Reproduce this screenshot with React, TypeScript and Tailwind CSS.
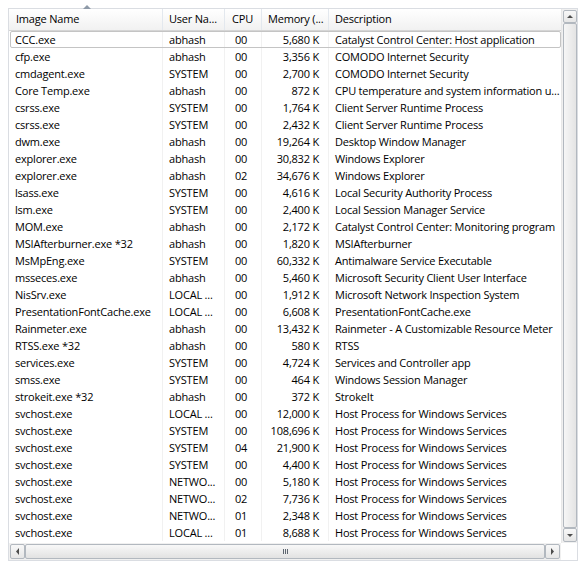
type Row = [string, string, string, string, string];

const rows: Row[] = [
  ["CCC.exe", "abhash", "00", "5,680 K", "Catalyst Control Center: Host application"],
  ["cfp.exe", "abhash", "00", "3,356 K", "COMODO Internet Security"],
  ["cmdagent.exe", "SYSTEM", "00", "2,700 K", "COMODO Internet Security"],
  ["Core Temp.exe", "abhash", "00", "872 K", "CPU temperature and system information u..."],
  ["csrss.exe", "SYSTEM", "00", "1,764 K", "Client Server Runtime Process"],
  ["csrss.exe", "SYSTEM", "00", "2,432 K", "Client Server Runtime Process"],
  ["dwm.exe", "abhash", "00", "19,264 K", "Desktop Window Manager"],
  ["explorer.exe", "abhash", "00", "30,832 K", "Windows Explorer"],
  ["explorer.exe", "abhash", "02", "34,676 K", "Windows Explorer"],
  ["lsass.exe", "SYSTEM", "00", "4,616 K", "Local Security Authority Process"],
  ["lsm.exe", "SYSTEM", "00", "2,400 K", "Local Session Manager Service"],
  ["MOM.exe", "abhash", "00", "2,172 K", "Catalyst Control Center: Monitoring program"],
  ["MSIAfterburner.exe *32", "abhash", "00", "1,820 K", "MSIAfterburner"],
  ["MsMpEng.exe", "SYSTEM", "00", "60,332 K", "Antimalware Service Executable"],
  ["msseces.exe", "abhash", "00", "5,460 K", "Microsoft Security Client User Interface"],
  ["NisSrv.exe", "LOCAL ...", "00", "1,912 K", "Microsoft Network Inspection System"],
  ["PresentationFontCache.exe", "LOCAL ...", "00", "6,608 K", "PresentationFontCache.exe"],
  ["Rainmeter.exe", "abhash", "00", "13,432 K", "Rainmeter - A Customizable Resource Meter"],
  ["RTSS.exe *32", "abhash", "00", "580 K", "RTSS"],
  ["services.exe", "SYSTEM", "00", "4,724 K", "Services and Controller app"],
  ["smss.exe", "SYSTEM", "00", "464 K", "Windows Session Manager"],
  ["strokeit.exe *32", "abhash", "00", "372 K", "StrokeIt"],
  ["svchost.exe", "LOCAL ...", "00", "12,000 K", "Host Process for Windows Services"],
  ["svchost.exe", "SYSTEM", "00", "108,696 K", "Host Process for Windows Services"],
  ["svchost.exe", "SYSTEM", "04", "21,900 K", "Host Process for Windows Services"],
  ["svchost.exe", "SYSTEM", "00", "4,400 K", "Host Process for Windows Services"],
  ["svchost.exe", "NETWO...", "00", "5,180 K", "Host Process for Windows Services"],
  ["svchost.exe", "NETWO...", "02", "7,736 K", "Host Process for Windows Services"],
  ["svchost.exe", "NETWO...", "01", "2,348 K", "Host Process for Windows Services"],
  ["svchost.exe", "LOCAL ...", "01", "8,688 K", "Host Process for Windows Services"],
];

function Arrow({ dir }: { dir: "up" | "down" | "left" | "right" }) {
  const pts = {
    up: "1,4 4,1 7,4",
    down: "1,1 4,4 7,1",
    left: "4,0 1,3.5 4,7",
    right: "1,0 4,3.5 1,7",
  }[dir];
  const vertical = dir === "up" || dir === "down";
  return (
    <svg viewBox={vertical ? "0 0 8 5" : "0 0 5 7"} className={vertical ? "w-[8px] h-[5px]" : "w-[5px] h-[7px]"}>
      <polygon points={pts} fill="#4d4d4d" />
    </svg>
  );
}

export default function App() {
  return (
    <div
      className="relative w-[587px] h-[568px] bg-white pt-[8px] pl-[8px] text-[11px] tracking-[-0.2px] text-black"
      style={{ fontFamily: "'Open Sans', 'Noto Sans', sans-serif" }}
    >
      {/* sort indicator */}
      <svg viewBox="0 0 8 4" className="absolute left-[83px] top-[5px] w-[8px] h-[4px]">
        <polygon points="0,4 4,0 8,4" fill="#8e9aa8" />
      </svg>
      <div className="w-[570px] h-[553px] border border-[#dadde2] flex flex-col">
        <div className="flex flex-1">
          {/* ── list ───────────────────────────── */}
          <div className="w-[552px] flex flex-col">
            <div className="h-[22px] flex border-b border-[#d5d5d5] bg-gradient-to-b from-white to-[#f1f1f1] whitespace-nowrap">
              <div className="w-[154px] pl-[7px] flex items-center border-r border-[#e3e8ee]">Image Name</div>
              <div className="w-[62px] pl-[6px] flex items-center border-r border-[#e3e8ee]">User Na...</div>
              <div className="w-[37px] pl-[7px] flex items-center border-r border-[#e3e8ee]">CPU</div>
              <div className="w-[67px] pl-[6px] flex items-center border-r border-[#e3e8ee] overflow-hidden">Memory (...</div>
              <div className="flex-1 pl-[6px] flex items-center">Description</div>
            </div>
            <div className="flex flex-col">
              {rows.map((r, i) => (
                <div
                  key={i}
                  className={`h-[17px] flex leading-[17px] whitespace-nowrap ${
                    i === 0 ? "outline outline-1 outline-[#c4c4c4] -outline-offset-1 rounded-[2px] ml-px" : ""
                  }`}
                >
                  <div className={`${i === 0 ? "w-[153px] pl-[5px]" : "w-[154px] pl-[6px]"} border-r border-[#f1f1f1] overflow-hidden`}>
                    {r[0]}
                  </div>
                  <div className="w-[62px] pl-[6px] border-r border-[#f1f1f1] overflow-hidden">{r[1]}</div>
                  <div className="w-[37px] pl-[10px] border-r border-[#f1f1f1]">{r[2]}</div>
                  <div className="w-[67px] pr-[9px] text-right border-r border-[#f1f1f1]">{r[3]}</div>
                  <div className="flex-1 pl-[6px] overflow-hidden">{r[4]}</div>
                </div>
              ))}
            </div>
          </div>
          {/* ── vertical scrollbar ─────────────── */}
          <div className="w-[16px] bg-[#f0f0f0] border-l border-[#e8e8e8] flex flex-col items-center py-px">
            <div className="w-[14px] h-[13px] rounded-[2px] border border-[#b2b8bf] bg-gradient-to-b from-[#f8f8f8] to-[#e6e6e6] flex items-center justify-center">
              <Arrow dir="up" />
            </div>
            <div className="w-[14px] flex-1 rounded-[2px] border border-[#b2b8bf] bg-gradient-to-r from-[#f6f6f6] to-[#e4e4e4]" />
            <div className="w-[14px] h-[14px] rounded-[2px] border border-[#b2b8bf] bg-gradient-to-b from-[#f8f8f8] to-[#e6e6e6] flex items-center justify-center">
              <Arrow dir="down" />
            </div>
          </div>
        </div>
        {/* ── horizontal scrollbar ─────────────── */}
        <div className="h-[17px] flex">
          <div className="w-[552px] bg-[#f0f0f0] flex items-center px-px">
            <div className="w-[15px] h-[15px] rounded-[2px] border border-[#b2b8bf] bg-gradient-to-b from-[#f8f8f8] to-[#e6e6e6] flex items-center justify-center">
              <Arrow dir="left" />
            </div>
            <div className="flex-1 h-[15px] rounded-[2px] border border-[#b2b8bf] bg-gradient-to-b from-[#f8f8f8] to-[#e2e2e2] flex items-center justify-center">
              <div className="flex gap-[1px]">
                <div className="w-[1px] h-[5px] bg-[#5e6670]" />
                <div className="w-[1px] h-[5px] bg-[#5e6670]" />
                <div className="w-[1px] h-[5px] bg-[#5e6670]" />
              </div>
            </div>
            <div className="w-[15px] h-[15px] rounded-[2px] border border-[#b2b8bf] bg-gradient-to-b from-[#f8f8f8] to-[#e6e6e6] flex items-center justify-center">
              <Arrow dir="right" />
            </div>
          </div>
          <div className="flex-1 bg-white" />
        </div>
      </div>
    </div>
  );
}
